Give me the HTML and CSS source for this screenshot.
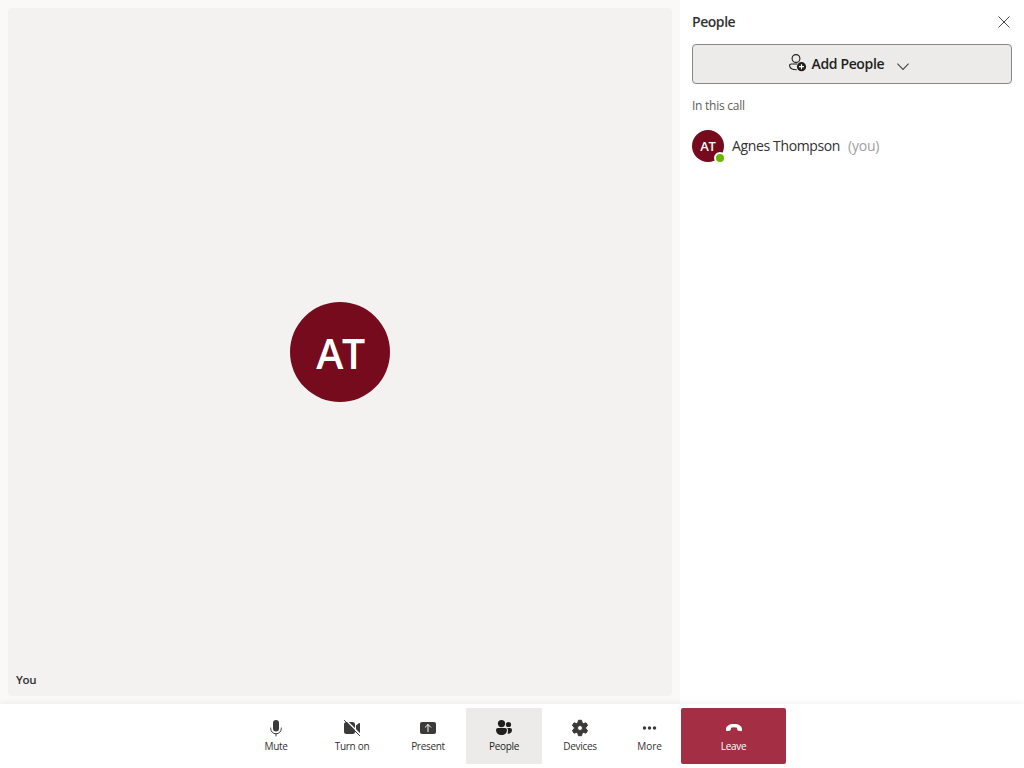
FILE: index.html
```html
<!DOCTYPE html>
<html lang="en">
<head>
<meta charset="utf-8">
<title>Call</title>
<link rel="stylesheet" href="styles.css">
</head>
<body>
<div class="call">
  <div class="content">
    <main class="stage">
      <section class="tile">
        <div class="avatar avatar-large"><span>AT</span></div>
        <div class="tile-name">You</div>
      </section>
    </main>
    <aside class="pane">
      <header class="pane-header">
        <h2 class="pane-title">People</h2>
        <svg class="close" width="12" height="12" viewBox="0 0 12 12"><path d="M.5.5l11 11M11.500.5l-11 11"/></svg>
      </header>
      <button class="add-people">
        <svg class="add-icon" width="18" height="18" viewBox="0 0 18 18">
          <circle class="line" cx="7" cy="4.500" r="3.900"/>
          <path class="line" d="M8.300 10H2.200C1.200 10 .6 10.700.6 11.600c0 2.700 2.900 4.300 7.200 4.200"/>
          <circle class="solid" cx="12.500" cy="12.700" r="4.600"/>
          <path class="plus" d="M12.500 10.200v5M10 12.700h5"/>
        </svg>
        <span class="add-label">Add People</span>
        <svg class="chevron" width="12" height="8" viewBox="0 0 12 8"><path d="M.4.7L6 6.500 11.600.7"/></svg>
      </button>
      <div class="section-label">In this call</div>
      <div class="participant">
        <div class="avatar avatar-small"><span>AT</span><i class="presence"></i></div>
        <span class="participant-name">Agnes Thompson</span>
        <span class="participant-you">(you)</span>
      </div>
    </aside>
  </div>
  <nav class="controls">
    <button class="control">
      <svg width="20" height="20" viewBox="0 0 20 20"><rect x="7" y="2" width="6" height="11.500" rx="3"/><path d="M4.700 10v.5a5.300 5.300 0 0 0 10.600 0V10M10 15.800V18" fill="none" stroke="#3b3a39" stroke-linecap="round"/></svg>
      <span>Mute</span>
    </button>
    <button class="control">
      <svg width="20" height="20" viewBox="0 0 20 20"><path d="M4.500 4H10.500A2.500 2.500 0 0 1 13 6.500v7a2.500 2.500 0 0 1-2.500 2.500h-6A2.500 2.500 0 0 1 2 13.500v-7A2.500 2.500 0 0 1 4.500 4zM14 7.500l2.800-2.300q1.200-.7 1.200.4v8.800q0 1.100-1.200.4L14 12.500z"/><path d="M3.200 1.300l15.500 15.500" stroke="#fff" stroke-width="1.300"/><path d="M2.400 2.400l15.200 15.200" stroke="#3b3a39" stroke-linecap="round"/></svg>
      <span>Turn on</span>
    </button>
    <button class="control">
      <svg width="20" height="20" viewBox="0 0 20 20"><rect x="2" y="4" width="16" height="12" rx="2"/><path d="M10 13.500v-7M7.300 9.200L10 6.500l2.700 2.700" fill="none" stroke="#fff" stroke-linecap="round" stroke-linejoin="round"/></svg>
      <span>Present</span>
    </button>
    <button class="control control-active">
      <svg width="20" height="20" viewBox="0 0 20 20"><circle cx="7.500" cy="5.600" r="3.600"/><circle cx="14.500" cy="6.500" r="2.600"/><path d="M4 10h7a2 2 0 0 1 2 2c0 3-2.400 5-5.500 5S2 15 2 12a2 2 0 0 1 2-2z"/><path d="M13.200 10H16a2 2 0 0 1 2 2c0 2.600-2 4-4.700 3.600.9-1.200 1-4.200-.1-5.600z"/></svg>
      <span>People</span>
    </button>
    <button class="control">
      <svg width="20" height="20" viewBox="0 0 20 20"><path fill-rule="evenodd" stroke="#3b3a39" stroke-linejoin="round" d="M8.400 2.300h3.200l.5 2.400 1.500.9 2.400-.8 1.600 2.800-1.800 1.500v1.800l1.800 1.500-1.600 2.800-2.400-.8-1.500.9-.5 2.400H8.400l-.5-2.400-1.500-.9-2.400.8-1.600-2.800 1.800-1.500V9.100L2.400 7.600 4 4.800l2.400.8 1.500-.9zM7.500 10a2.500 2.500 0 1 0 5 0 2.500 2.500 0 1 0-5 0z"/></svg>
      <span>Devices</span>
    </button>
    <button class="control control-more">
      <svg width="20" height="20" viewBox="0 0 20 20"><circle cx="4.500" cy="10" r="1.750"/><circle cx="9.500" cy="10" r="1.750"/><circle cx="14.500" cy="10" r="1.750"/></svg>
      <span>More</span>
    </button>
    <button class="control control-leave">
      <svg width="20" height="20" viewBox="0 0 20 20"><path d="M2 11.200C2 8 5.200 6 10 6s8 2 8 5.200v.7q0 1.400-1.400 1.200l-2.300-.4q-1-.2-1.100-1.200l-.2-1.700C11.300 9.100 8.700 9.100 7 9.800l-.2 1.700q-.1 1-1.100 1.200l-2.300.4Q2 13.300 2 11.900z"/></svg>
      <span>Leave</span>
    </button>
  </nav>
</div>
</body>
</html>
```
FILE: styles.css
```css
* { box-sizing: border-box; }
body {
  margin: 0;
  font-family: "Open Sans", "Noto Sans", sans-serif;
  color: #323130;
}
button { font: inherit; color: inherit; margin: 0; padding: 0; border: 0; background: none; }
svg { display: block; flex: none; }
span { white-space: nowrap; }
.call { display: flex; flex-direction: column; width: 1024px; height: 768px; overflow: hidden; background: #fff; }
.content { display: flex; height: 704px; }
.stage { width: 680px; padding: 8px; background: #faf9f8; }
.tile {
  display: grid;
  grid-template-rows: 32px 1fr 32px;
  height: 688px;
  border-radius: 4px;
  background: #f3f2f1;
}
.avatar {
  display: flex;
  align-items: center;
  justify-content: center;
  border-radius: 50%;
  background: #750b1c;
  color: #fff;
  font-weight: 600;
}
.avatar-large { grid-row: 2; place-self: center; width: 100px; height: 100px; font-size: 41px; line-height: 50px; }
.avatar-large span { padding-top: 2px; letter-spacing: -1.500px; }
.tile-name { grid-row: 3; padding-left: 8px; font-size: 11.500px; font-weight: 600; line-height: 32px; letter-spacing: -.3px; }
.pane { display: flex; flex-direction: column; width: 344px; padding: 0 12px; }
.pane-header { display: flex; align-items: center; justify-content: space-between; height: 44px; padding-right: 2px; }
.pane-title { margin: 0; font-size: 14px; font-weight: 600; line-height: 20px; letter-spacing: -.45px; }
.close { fill: none; stroke: #484644; stroke-width: 1; }
.add-people {
  display: flex;
  align-items: center;
  width: 320px;
  height: 40px;
  padding-left: 96px;
  border: 1px solid #8a8886;
  border-radius: 4px;
  background: #edebe9;
  color: #201f1e;
}
.add-icon { margin: -2px 4.500px 0 0; }
.line { fill: none; stroke: #201f1e; stroke-width: 1.100; }
.solid { fill: #201f1e; }
.plus { stroke: #fff; stroke-width: 1.200; }
.add-label { width: 73px; margin-right: 12.500px; padding-bottom: 2px; text-align: left; font-size: 14px; font-weight: 600; letter-spacing: -.36px; }
.chevron { margin-top: 5px; fill: none; stroke: #484644; stroke-width: 1.100; }
.section-label { height: 44px; font-size: 12px; line-height: 44px; letter-spacing: -.25px; color: #605e5c; }
.participant { display: flex; align-items: center; height: 36px; font-size: 14px; }
.avatar-small { position: relative; width: 32px; height: 32px; margin-right: 8px; font-size: 13px; letter-spacing: -.3px; }
.presence {
  position: absolute;
  right: -2px;
  bottom: -2px;
  width: 12px;
  height: 12px;
  border: 2px solid #fff;
  border-radius: 50%;
  background: #6bb700;
}
.participant-name { width: 108px; margin-right: 8px; padding-bottom: 1px; letter-spacing: -.36px; }
.participant-you { padding-bottom: 1px; color: #a19f9d; letter-spacing: -.2px; }
.controls {
  display: flex;
  justify-content: center;
  height: 64px;
  padding: 4px 0;
  background: #fff;
  box-shadow: 0 0 7px rgba(0, 0, 0, .08);
  z-index: 1;
}
.control {
  display: flex;
  flex-direction: column;
  align-items: center;
  width: 76px;
  height: 56px;
  padding-top: 10px;
  font-size: 10px;
  line-height: 16px;
  letter-spacing: -.3px;
}
.control svg { fill: #3b3a39; }
.control-active { background: #edebe9; color: #201f1e; }
.control-active svg { fill: #201f1e; }
.control-more { width: 63px; letter-spacing: -.1px; }
.control-leave { width: 105px; border-radius: 2px; background: #a42e43; color: #fff; }
.control-leave svg { fill: #fff; }
```
